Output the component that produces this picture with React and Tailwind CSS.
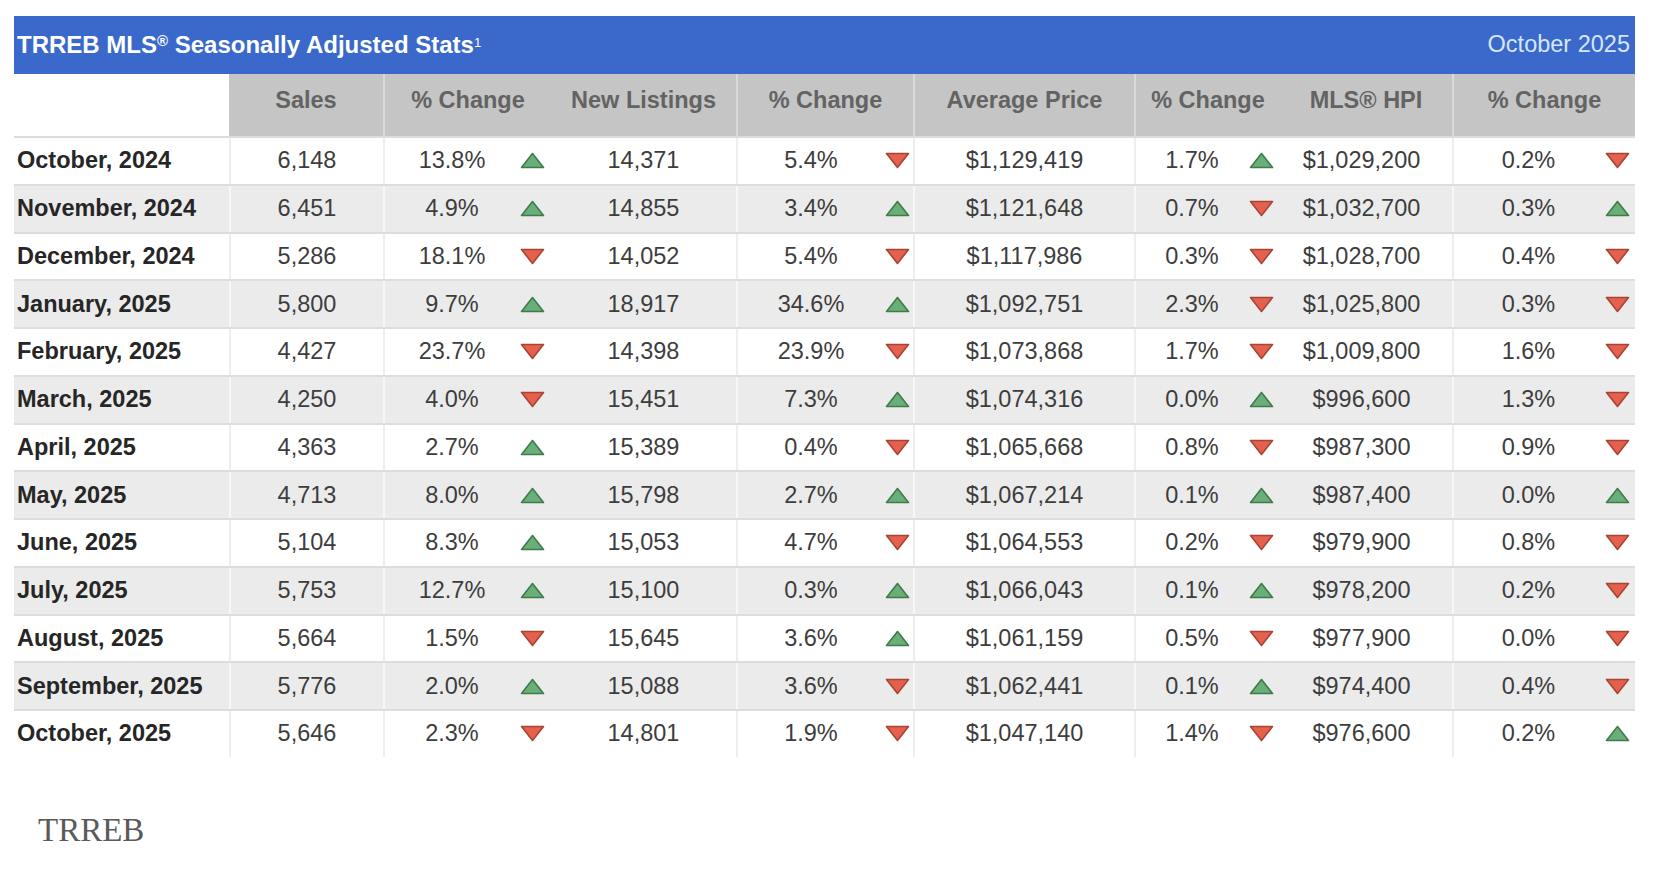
const rows = [
  ["October, 2024", "6,148", "13.8%", "up", "14,371", "5.4%", "down", "$1,129,419", "1.7%", "up", "$1,029,200", "0.2%", "down"],
  ["November, 2024", "6,451", "4.9%", "up", "14,855", "3.4%", "up", "$1,121,648", "0.7%", "down", "$1,032,700", "0.3%", "up"],
  ["December, 2024", "5,286", "18.1%", "down", "14,052", "5.4%", "down", "$1,117,986", "0.3%", "down", "$1,028,700", "0.4%", "down"],
  ["January, 2025", "5,800", "9.7%", "up", "18,917", "34.6%", "up", "$1,092,751", "2.3%", "down", "$1,025,800", "0.3%", "down"],
  ["February, 2025", "4,427", "23.7%", "down", "14,398", "23.9%", "down", "$1,073,868", "1.7%", "down", "$1,009,800", "1.6%", "down"],
  ["March, 2025", "4,250", "4.0%", "down", "15,451", "7.3%", "up", "$1,074,316", "0.0%", "up", "$996,600", "1.3%", "down"],
  ["April, 2025", "4,363", "2.7%", "up", "15,389", "0.4%", "down", "$1,065,668", "0.8%", "down", "$987,300", "0.9%", "down"],
  ["May, 2025", "4,713", "8.0%", "up", "15,798", "2.7%", "up", "$1,067,214", "0.1%", "up", "$987,400", "0.0%", "up"],
  ["June, 2025", "5,104", "8.3%", "up", "15,053", "4.7%", "down", "$1,064,553", "0.2%", "down", "$979,900", "0.8%", "down"],
  ["July, 2025", "5,753", "12.7%", "up", "15,100", "0.3%", "up", "$1,066,043", "0.1%", "up", "$978,200", "0.2%", "down"],
  ["August, 2025", "5,664", "1.5%", "down", "15,645", "3.6%", "up", "$1,061,159", "0.5%", "down", "$977,900", "0.0%", "down"],
  ["September, 2025", "5,776", "2.0%", "up", "15,088", "3.6%", "down", "$1,062,441", "0.1%", "up", "$974,400", "0.4%", "down"],
  ["October, 2025", "5,646", "2.3%", "down", "14,801", "1.9%", "down", "$1,047,140", "1.4%", "down", "$976,600", "0.2%", "up"],
];

const Arrow = ({ dir }) =>
  dir === "up" ? (
    <svg width="25" height="17" viewBox="0 0 25 17">
      <polygon points="12.5,1.5 23.5,15.5 1.5,15.5" fill="#6aae79" stroke="#3e7c4b" strokeWidth="1.6" strokeLinejoin="round" />
    </svg>
  ) : (
    <svg width="25" height="17" viewBox="0 0 25 17">
      <polygon points="1.5,1.5 23.5,1.5 12.5,15.5" fill="#e6604e" stroke="#a84434" strokeWidth="1.6" strokeLinejoin="round" />
    </svg>
  );

const Pct = ({ value, dir, textW, arrowW, divider }) => (
  <div className={`flex items-center border-l-2 ${divider}`}>
    <div className={`${textW} text-center`}>{value}</div>
    <div className={`${arrowW} flex justify-center`}>
      <Arrow dir={dir} />
    </div>
  </div>
);

const cols = "grid grid-cols-[215px_154px_168px_185px_177px_221px_146px_172px_183px]";

const App = () => {
  return (
    <div className="min-h-screen bg-white pt-[16px] pl-[14px] font-['Liberation_Sans',Arial,sans-serif]">
      <div className="w-[1621px]">
        {/* Title bar */}
        <div className="flex h-[58px] items-center justify-between bg-[#3a69cb] pl-[3px] pr-[5px]">
          <div className="text-[24px] font-bold text-white">
            TRREB MLS<sup className="text-[15px] font-bold">®</sup> Seasonally Adjusted Stats
            <sup className="text-[13px] font-normal">1</sup>
          </div>
          <div className="text-[23.5px] text-[#d6e6ff]">October 2025</div>
        </div>

        {/* Header */}
        <div className={`${cols} h-[62px] text-[23.5px] font-bold text-[#636363]`}>
          <div className="bg-white" />
          <div className="flex items-center justify-center bg-[#c5c5c5] pb-[8px]">Sales</div>
          <div className="flex items-center justify-center border-l-2 border-[#d9d9d9] bg-[#c5c5c5] pb-[8px]">% Change</div>
          <div className="flex items-center justify-center bg-[#c5c5c5] pb-[8px]">New Listings</div>
          <div className="flex items-center justify-center border-l-2 border-[#d9d9d9] bg-[#c5c5c5] pb-[8px]">% Change</div>
          <div className="flex items-center justify-center border-l-2 border-[#d9d9d9] bg-[#c5c5c5] pb-[8px]">Average Price</div>
          <div className="flex items-center justify-center border-l-2 border-[#d9d9d9] bg-[#c5c5c5] pb-[8px]">% Change</div>
          <div className="flex items-center justify-center bg-[#c5c5c5] pb-[8px]">MLS® HPI</div>
          <div className="flex items-center justify-center border-l-2 border-[#d9d9d9] bg-[#c5c5c5] pb-[8px]">% Change</div>
        </div>

        {/* Rows */}
        {rows.map((r, i) => {
          const gray = i % 2 === 1;
          const divider = gray ? "border-[#f7f7f7]" : "border-[#eeeeee]";
          return (
            <div
              key={r[0]}
              className={`${cols} h-[47.75px] border-t-2 border-[#dddddd] text-[23.5px] text-[#3d3d3d] ${gray ? "bg-[#ebebeb]" : "bg-white"}`}
            >
              <div className="flex items-center pl-[3px] font-bold text-[#262626]">{r[0]}</div>
              <div className={`flex items-center justify-center border-l-2 ${divider}`}>{r[1]}</div>
              <Pct value={r[2]} dir={r[3]} textW="w-[134px]" arrowW="w-[26px]" divider={divider} />
              <div className="flex items-center justify-center">{r[4]}</div>
              <Pct value={r[5]} dir={r[6]} textW="w-[146px]" arrowW="w-[26px]" divider={divider} />
              <div className={`flex items-center justify-center border-l-2 ${divider}`}>{r[7]}</div>
              <Pct value={r[8]} dir={r[9]} textW="w-[112px]" arrowW="w-[27px]" divider={divider} />
              <div className="flex items-center justify-center pr-[9px]">{r[10]}</div>
              <Pct value={r[11]} dir={r[12]} textW="w-[149px]" arrowW="w-[28px]" divider={divider} />
            </div>
          );
        })}
      </div>

      {/* Footer logo text */}
      <div className="mt-[57px] pl-[24px] font-['Liberation_Serif','Times_New_Roman',serif] text-[33px] leading-none text-[#5a5a5a]">
        TRREB
      </div>
    </div>
  );
};

export default App;
